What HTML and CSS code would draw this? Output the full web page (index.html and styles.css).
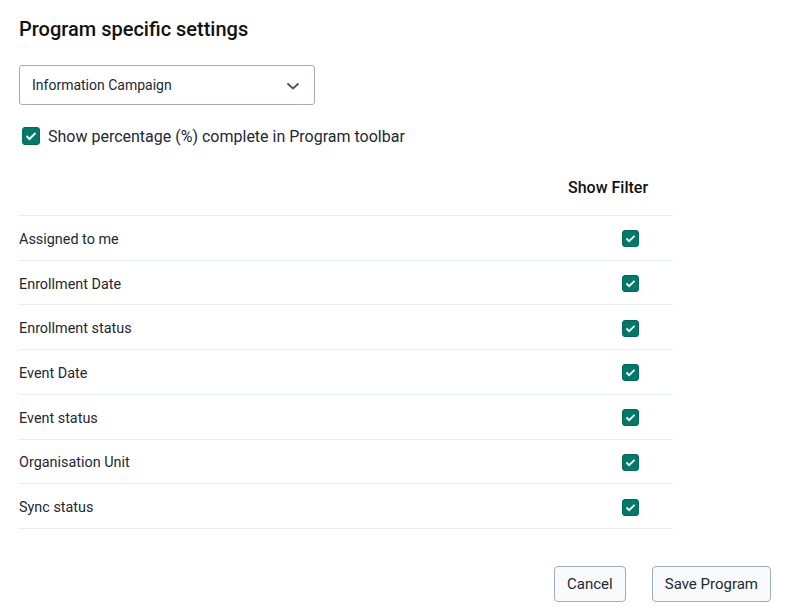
FILE: index.html
```html
<!DOCTYPE html>
<html>
<head>
<meta charset="utf-8">
<link rel="stylesheet" href="styles.css">
</head>
<body>
<div class="page">
  <h2 class="title">Program specific settings</h2>
  <div class="select">
    <span class="select-text">Information Campaign</span>
    <svg class="chevron" width="14" height="8" viewBox="0 0 14 8"><path d="M1.5 1.5 L7 6.5 L12.5 1.5" fill="none" stroke="#4a5768" stroke-width="2"/></svg>
  </div>
  <label class="check-row">
    <span class="cb"><svg width="12" height="10" viewBox="0 0 12 10"><path d="M1.5 5 L4.5 8 L10.5 2" fill="none" stroke="#fff" stroke-width="2"/></svg></span>
    <span class="check-label">Show percentage (%) complete in Program toolbar</span>
  </label>
  <div class="table">
    <div class="thead">
      <span></span>
      <span class="th">Show Filter</span>
    </div>
    <div class="row"><span class="cell">Assigned to me</span><span class="cbcell"><span class="cb sm"><svg width="11" height="9" viewBox="0 0 12 10"><path d="M1.5 5 L4.5 8 L10.5 2" fill="none" stroke="#fff" stroke-width="2"/></svg></span></span></div>
    <div class="row"><span class="cell">Enrollment Date</span><span class="cbcell"><span class="cb sm"><svg width="11" height="9" viewBox="0 0 12 10"><path d="M1.5 5 L4.5 8 L10.5 2" fill="none" stroke="#fff" stroke-width="2"/></svg></span></span></div>
    <div class="row"><span class="cell">Enrollment status</span><span class="cbcell"><span class="cb sm"><svg width="11" height="9" viewBox="0 0 12 10"><path d="M1.5 5 L4.5 8 L10.5 2" fill="none" stroke="#fff" stroke-width="2"/></svg></span></span></div>
    <div class="row"><span class="cell">Event Date</span><span class="cbcell"><span class="cb sm"><svg width="11" height="9" viewBox="0 0 12 10"><path d="M1.5 5 L4.5 8 L10.5 2" fill="none" stroke="#fff" stroke-width="2"/></svg></span></span></div>
    <div class="row"><span class="cell">Event status</span><span class="cbcell"><span class="cb sm"><svg width="11" height="9" viewBox="0 0 12 10"><path d="M1.5 5 L4.5 8 L10.5 2" fill="none" stroke="#fff" stroke-width="2"/></svg></span></span></div>
    <div class="row"><span class="cell">Organisation Unit</span><span class="cbcell"><span class="cb sm"><svg width="11" height="9" viewBox="0 0 12 10"><path d="M1.5 5 L4.5 8 L10.5 2" fill="none" stroke="#fff" stroke-width="2"/></svg></span></span></div>
    <div class="row"><span class="cell">Sync status</span><span class="cbcell"><span class="cb sm"><svg width="11" height="9" viewBox="0 0 12 10"><path d="M1.5 5 L4.5 8 L10.5 2" fill="none" stroke="#fff" stroke-width="2"/></svg></span></span></div>
  </div>
  <div class="actions">
    <button class="btn">Cancel</button>
    <button class="btn">Save Program</button>
  </div>
</div>
</body>
</html>
```

FILE: styles.css
```css
html, body {
  margin: 0;
  padding: 0;
  background: #ffffff;
}
body {
  font-family: Roboto, "Liberation Sans", sans-serif;
  color: #212934;
}
.page {
  padding: 17px 17px 0 19px;
  display: flex;
  flex-direction: column;
}
.title {
  margin: 0;
  font-size: 20px;
  line-height: 24px;
  font-weight: 500;
  color: #111;
}
.select {
  margin-top: 24px;
  width: 296px;
  height: 40px;
  box-sizing: border-box;
  border: 1px solid #a0adba;
  border-radius: 3px;
  display: flex;
  align-items: center;
  justify-content: space-between;
  padding: 0 14px 0 12px;
}
.select-text {
  font-size: 14px;
  color: #212934;
}
.chevron {
  display: block;
  margin-top: 2px;
}
.check-row {
  margin-top: 22px;
  display: flex;
  align-items: center;
  gap: 8px;
  padding-left: 3px;
  height: 18px;
}
.cb {
  width: 18px;
  height: 18px;
  box-sizing: border-box;
  border-radius: 3px;
  background: #00796b;
  border: 1px solid #00695c;
  display: flex;
  align-items: center;
  justify-content: center;
  flex: none;
}
.cb.sm {
  width: 17px;
  height: 17px;
}
.cb svg { display: block; }
.check-label {
  font-size: 16px;
  color: #212934;
}
.table {
  width: 654px;
  display: flex;
  flex-direction: column;
}
.thead {
  display: grid;
  grid-template-columns: 1fr 105px;
  padding-top: 33px;
  padding-bottom: 17px;
  border-bottom: 1px solid #e8edf2;
}
.th {
  font-size: 16px;
  line-height: 20px;
  font-weight: 500;
  color: #111;
}
.row {
  display: grid;
  grid-template-columns: 1fr 105px;
  align-items: center;
  height: 44.71px;
  box-sizing: border-box;
  border-bottom: 1px solid #e8edf2;
}
.cell {
  font-size: 14.4px;
  color: #212934;
  padding-top: 3px;
}
.cbcell {
  padding-left: 54px;
  display: flex;
  padding-top: 2px;
}
.actions {
  margin-top: 37px;
  display: flex;
  justify-content: flex-end;
  gap: 26px;
}
.btn {
  height: 36px;
  box-sizing: border-box;
  padding: 0 12px;
  border: 1px solid #a0adba;
  border-radius: 4px;
  background: #f9fafb;
  color: #212934;
  font-family: Roboto, "Liberation Sans", sans-serif;
  font-size: 15px;
}
```
